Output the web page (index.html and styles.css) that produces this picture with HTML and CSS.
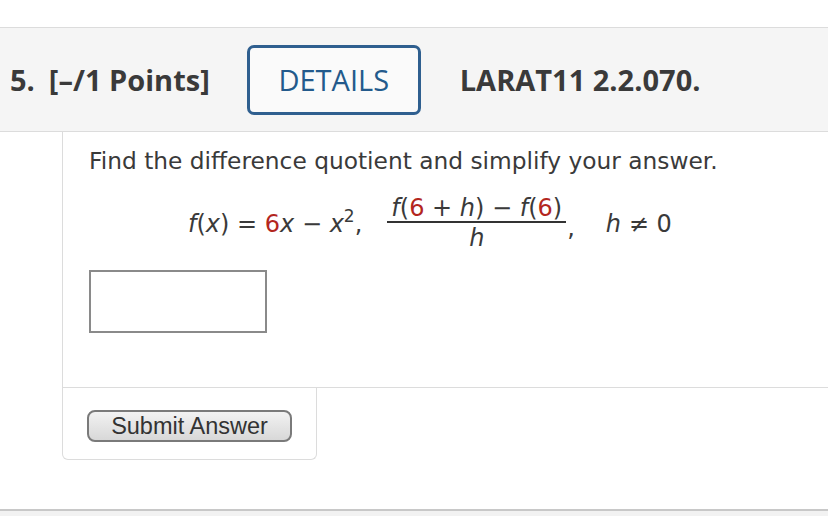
FILE: index.html
```html
<!DOCTYPE html>
<html>
<head>
<meta charset="utf-8">
<link rel="stylesheet" href="styles.css">
</head>
<body>
<div class="top"></div>
<header class="qhead">
  <span class="num">5.</span>
  <span class="pts">[–/1 Points]</span>
  <span class="details">DETAILS</span>
  <span class="ref">LARAT11 2.2.070.</span>
</header>
<section class="question">
  <div class="qbody">
    <p class="prompt">Find the difference quotient and simplify your answer.</p>
    <div class="math">
      <span class="expr"><i>f</i>(<i>x</i>) = <span class="red">6</span><i>x</i> − <i>x</i><sup>2</sup>,</span>
      <span class="frac">
        <span class="numr"><i>f</i>(<span class="red">6</span> + <i>h</i>) − <i>f</i>(<span class="red">6</span>)</span>
        <span class="den"><i>h</i></span>
      </span>
      <span class="comma">,</span>
      <span class="cond"><i>h</i> ≠ 0</span>
    </div>
    <div class="answer"></div>
  </div>
  <div class="submitbox">
    <button class="submit">Submit Answer</button>
  </div>
</section>
<div class="foot"></div>
</body>
</html>
```
FILE: styles.css
```css
html, body { margin: 0; padding: 0; background: #fff; }
body { width: 828px; height: 516px; overflow: hidden; color: #333; }
.top { height: 27px; }
.qhead {
  display: flex;
  align-items: center;
  height: 103px;
  background: #f5f5f5;
  border-top: 1px solid #dcdcdc;
  border-bottom: 1px solid #dcdcdc;
  font-family: "Open Sans", sans-serif;
  font-weight: 700;
  font-size: 29px;
  color: #3a3a3a;
}
.num { margin-left: 10px; }
.pts { margin-left: 14px; }
.details {
  margin-left: 37px;
  box-sizing: border-box;
  width: 174px;
  height: 70px;
  border: 3px solid #2f5f8f;
  border-radius: 7px;
  display: flex;
  align-items: center;
  justify-content: center;
  color: #235a8c;
  font-weight: 500;
  background: #fafafa;
}
.ref { margin-left: 39px; }
.question {
  margin-left: 62px;
  font-family: "DejaVu Sans", Verdana, sans-serif;
}
.qbody {
  border-left: 1px solid #dcdcdc;
  border-bottom: 1px solid #dcdcdc;
  padding: 14px 0 0 26px;
  height: 241px;
}
.prompt {
  margin: 0;
  font-size: 23.3px;
  line-height: 30px;
  color: #3a3a3a;
}
.math {
  display: flex;
  align-items: center;
  margin-top: 19px;
  margin-left: 99px;
  font-size: 24px;
  color: #3a3a3a;
}
.math i { font-style: italic; }
.red { color: #b3261e; }
.math sup { font-size: 17px; line-height: 0; vertical-align: 10px; }
.frac {
  display: inline-flex;
  flex-direction: column;
  align-items: center;
  margin-left: 25px;
}
.numr {
  padding: 0 4px 0;
  border-bottom: 2px solid #333;
  line-height: 26px;
}
.den { line-height: 30px; }
.comma { align-self: center; margin-top: 8px; margin-left: 1px; }
.cond { margin-left: 31px; }
.answer {
  margin-top: 17px;
  width: 174px;
  height: 59px;
  border: 2px solid #8a8a8a;
}
.submitbox {
  box-sizing: border-box;
  width: 255px;
  height: 72px;
  border: 1px solid #dcdcdc;
  border-top: 0;
  border-radius: 0 0 6px 6px;
  padding-top: 22px;
  padding-left: 24px;
}
.submit {
  width: 205px;
  height: 32px;
  border: 2px solid #7a7a7a;
  border-radius: 8px;
  background: linear-gradient(#f2f2f2, #d8d8d8);
  font-family: "Liberation Sans", Arial, sans-serif;
  font-size: 23.5px;
  color: #333;
  padding: 0;
}
.foot {
  margin-top: 49px;
  border-top: 2px solid #c8c8c8;
  height: 10px;
  background: #f2f2f2;
}
```
